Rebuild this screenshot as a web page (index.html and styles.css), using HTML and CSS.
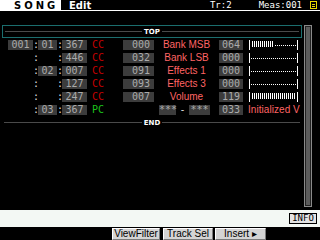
FILE: index.html
```html
<!DOCTYPE html>
<html lang="en">
<head>
  <meta charset="UTF-8">
  <title>Song Edit</title>
  <link rel="stylesheet" href="styles.css">
</head>
<body>

<div class="screen">
  <header class="topbar">
    <div class="mode">SONG</div>
    <div class="page">Edit</div>
    <div class="status">
      <span class="tr">Tr:2</span>
      <span class="meas">Meas:001</span>
      <svg class="menu-icon" width="8" height="8" viewBox="0 0 8 8">
        <rect x="0.5" y="0.5" width="6" height="7" fill="none" stroke="#e8d800"/>
        <path d="M2 3.5h3M2 5.5h3" stroke="#e8d800"/>
      </svg>
    </div>
  </header>

  <main class="main">
    <section class="list">
      <div class="marker marker-top"><span>TOP</span></div>

      <div class="row">
        <span class="cell">001</span><span class="sep">:</span><span class="cell">01</span><span class="sep">:</span><span class="cell">367</span>
        <span class="type cc">CC</span><span class="cell num">000</span><span class="name">Bank MSB</span><span class="cell">064</span>
        <span class="bar"><span class="fill" style="width: 48%"></span></span>
      </div>
      <div class="row">
        <span></span><span class="sep">:</span><span></span><span class="sep">:</span><span class="cell">446</span>
        <span class="type cc">CC</span><span class="cell num">032</span><span class="name">Bank LSB</span><span class="cell">000</span>
        <span class="bar"><span class="fill" style="width: 0%"></span></span>
      </div>
      <div class="row">
        <span></span><span class="sep">:</span><span class="cell">02</span><span class="sep">:</span><span class="cell">007</span>
        <span class="type cc">CC</span><span class="cell num">091</span><span class="name">Effects 1</span><span class="cell">000</span>
        <span class="bar"><span class="fill" style="width: 0%"></span></span>
      </div>
      <div class="row">
        <span></span><span class="sep">:</span><span></span><span class="sep">:</span><span class="cell">127</span>
        <span class="type cc">CC</span><span class="cell num">093</span><span class="name">Effects 3</span><span class="cell">000</span>
        <span class="bar"><span class="fill" style="width: 0%"></span></span>
      </div>
      <div class="row">
        <span></span><span class="sep">:</span><span></span><span class="sep">:</span><span class="cell">247</span>
        <span class="type cc">CC</span><span class="cell num">007</span><span class="name">Volume</span><span class="cell">119</span>
        <span class="bar"><span class="fill" style="width: 96%"></span></span>
      </div>
      <div class="row">
        <span></span><span class="sep">:</span><span class="cell">03</span><span class="sep">:</span><span class="cell">367</span>
        <span class="type pc">PC</span>
        <span class="bank"><span class="cell">***</span><span class="dash">-</span><span class="cell">***</span></span>
        <span class="cell">033</span>
        <span class="voice">Initialized V</span>
      </div>

      <div class="marker marker-end"><span>END</span></div>
    </section>
    <div class="scroll"></div>
  </main>

  <div class="infobar">
    <button class="info">INFO</button>
  </div>

  <footer class="softkeys">
    <button class="key key-filter">ViewFilter</button>
    <button class="key">Track Sel</button>
    <button class="key key-insert">Insert &#9656;</button>
  </footer>
</div>

</body>
</html>
```

FILE: styles.css
```css
* {
  box-sizing: border-box;
  margin: 0;
  padding: 0;
}

body {
  background: #000;
  color: #fff;
  font-family: "DejaVu Sans Mono", monospace;
  width: 320px;
  height: 240px;
  overflow: hidden;
}

.screen {
  display: flex;
  flex-direction: column;
  height: 240px;
}

/* header */

.topbar {
  display: flex;
  align-items: center;
  height: 11px;
  border-bottom: 1px solid #fff;
}

.mode {
  width: 61px;
  height: 10px;
  background: #fff;
  color: #000;
  font: bold 10px/11px "DejaVu Sans", sans-serif;
  letter-spacing: 3px;
  padding-left: 14px;
}

.page {
  height: 10px;
  margin-left: 8px;
  font: bold 10px/11px "DejaVu Sans", sans-serif;
}

.status {
  margin-left: auto;
  display: flex;
  align-items: center;
  font-size: 9px;
  line-height: 10px;
}

.tr {
  margin-right: 27px;
}

.meas {
  margin-right: 8px;
}

.menu-icon {
  margin-right: 2px;
}

/* event list */

.main {
  display: flex;
  margin-top: 14px;
  height: 182px;
}

.list {
  width: 300px;
  margin-left: 2px;
  overflow: hidden;
}

.marker {
  display: flex;
  align-items: center;
  justify-content: center;
  position: relative;
  height: 13px;
  font: bold 7px/8px "DejaVu Sans", sans-serif;
}

.marker::before {
  content: "";
  position: absolute;
  left: 2px;
  right: 2px;
  top: 5px;
  height: 1px;
  background: #4a4a4a;
}

.marker span {
  position: relative;
  background: #000;
  padding: 0 2px;
}

.marker-top {
  border: 1px solid #1b6e6e;
}

.marker-end {
  height: 9px;
}

.marker-end::before {
  top: 4px;
}

.row {
  display: grid;
  grid-template-columns: 25px 5px 19px 5px 25px 36px 31px 65px 24px 55px;
  align-items: start;
  height: 13px;
  padding-left: 6px;
  font-size: 10px;
  white-space: nowrap;
}

.marker-top + .row {
  margin-top: 2px;
}

.cell {
  height: 10px;
  line-height: 10px;
  background: #3c3c3c;
  color: #ababab;
  text-align: center;
}

.cell.num {
  text-align: right;
  padding-right: 4px;
}

.sep {
  text-align: center;
  color: #ddd;
  line-height: 10px;
}

.type {
  padding-left: 5px;
  line-height: 10px;
}

.cc {
  color: #c40000;
}

.pc {
  color: #1cc01c;
}

.name,
.voice {
  font: 10px/10px "Liberation Sans", sans-serif;
  color: #ff6464;
}

.name {
  text-align: center;
}

.voice {
  padding-left: 5px;
  letter-spacing: 0.05px;
}

.bank {
  grid-column: span 2;
  display: flex;
  align-items: center;
  padding-left: 36px;
}

.bank .cell {
  width: 17px;
}

.bank .cell + .dash + .cell {
  width: 21px;
}

.dash {
  width: 13px;
  text-align: center;
  color: #ddd;
  line-height: 10px;
}

/* value bar */

.bar {
  height: 10px;
  margin-left: 6px;
  border-left: 1px solid #fff;
  border-right: 1px solid #fff;
  background: repeating-linear-gradient(to right, #fff 0 1px, transparent 1px 2px) 1px 5px / calc(100% - 2px) 1px no-repeat;
}

.fill {
  display: block;
  height: 6px;
  margin: 1px 0 0 1px;
  background: repeating-linear-gradient(to right, #000 0 1px, #fff 1px 2px);
}

.scroll {
  width: 8px;
  margin-left: 2px;
  border: 1px solid #8a8a8a;
  background: #5c5c5c;
  box-shadow: inset 0 0 0 1px #222;
}

/* bottom bars */

.infobar {
  display: flex;
  justify-content: flex-end;
  margin-top: 3px;
  height: 17px;
  background: #f3f8f4;
  padding: 3px 3px 0 0;
}

.info {
  width: 28px;
  height: 11px;
  border: 1px solid #000;
  background: #e4e4e4;
  color: #000;
  font: 9px/9px "DejaVu Sans Mono", monospace;
}

.softkeys {
  display: flex;
  justify-content: flex-end;
  gap: 2px;
  margin-top: 1px;
  padding-right: 54px;
}

.key {
  height: 12px;
  width: 50px;
  background: #d4d4d4;
  color: #000;
  border: 1px solid;
  border-color: #fff #7a7a7a #7a7a7a #fff;
  font: 10px/10px "Liberation Sans", sans-serif;
}

.key-filter {
  width: 48px;
  margin-right: 1px;
}

.key-insert {
  width: 51px;
}
```
